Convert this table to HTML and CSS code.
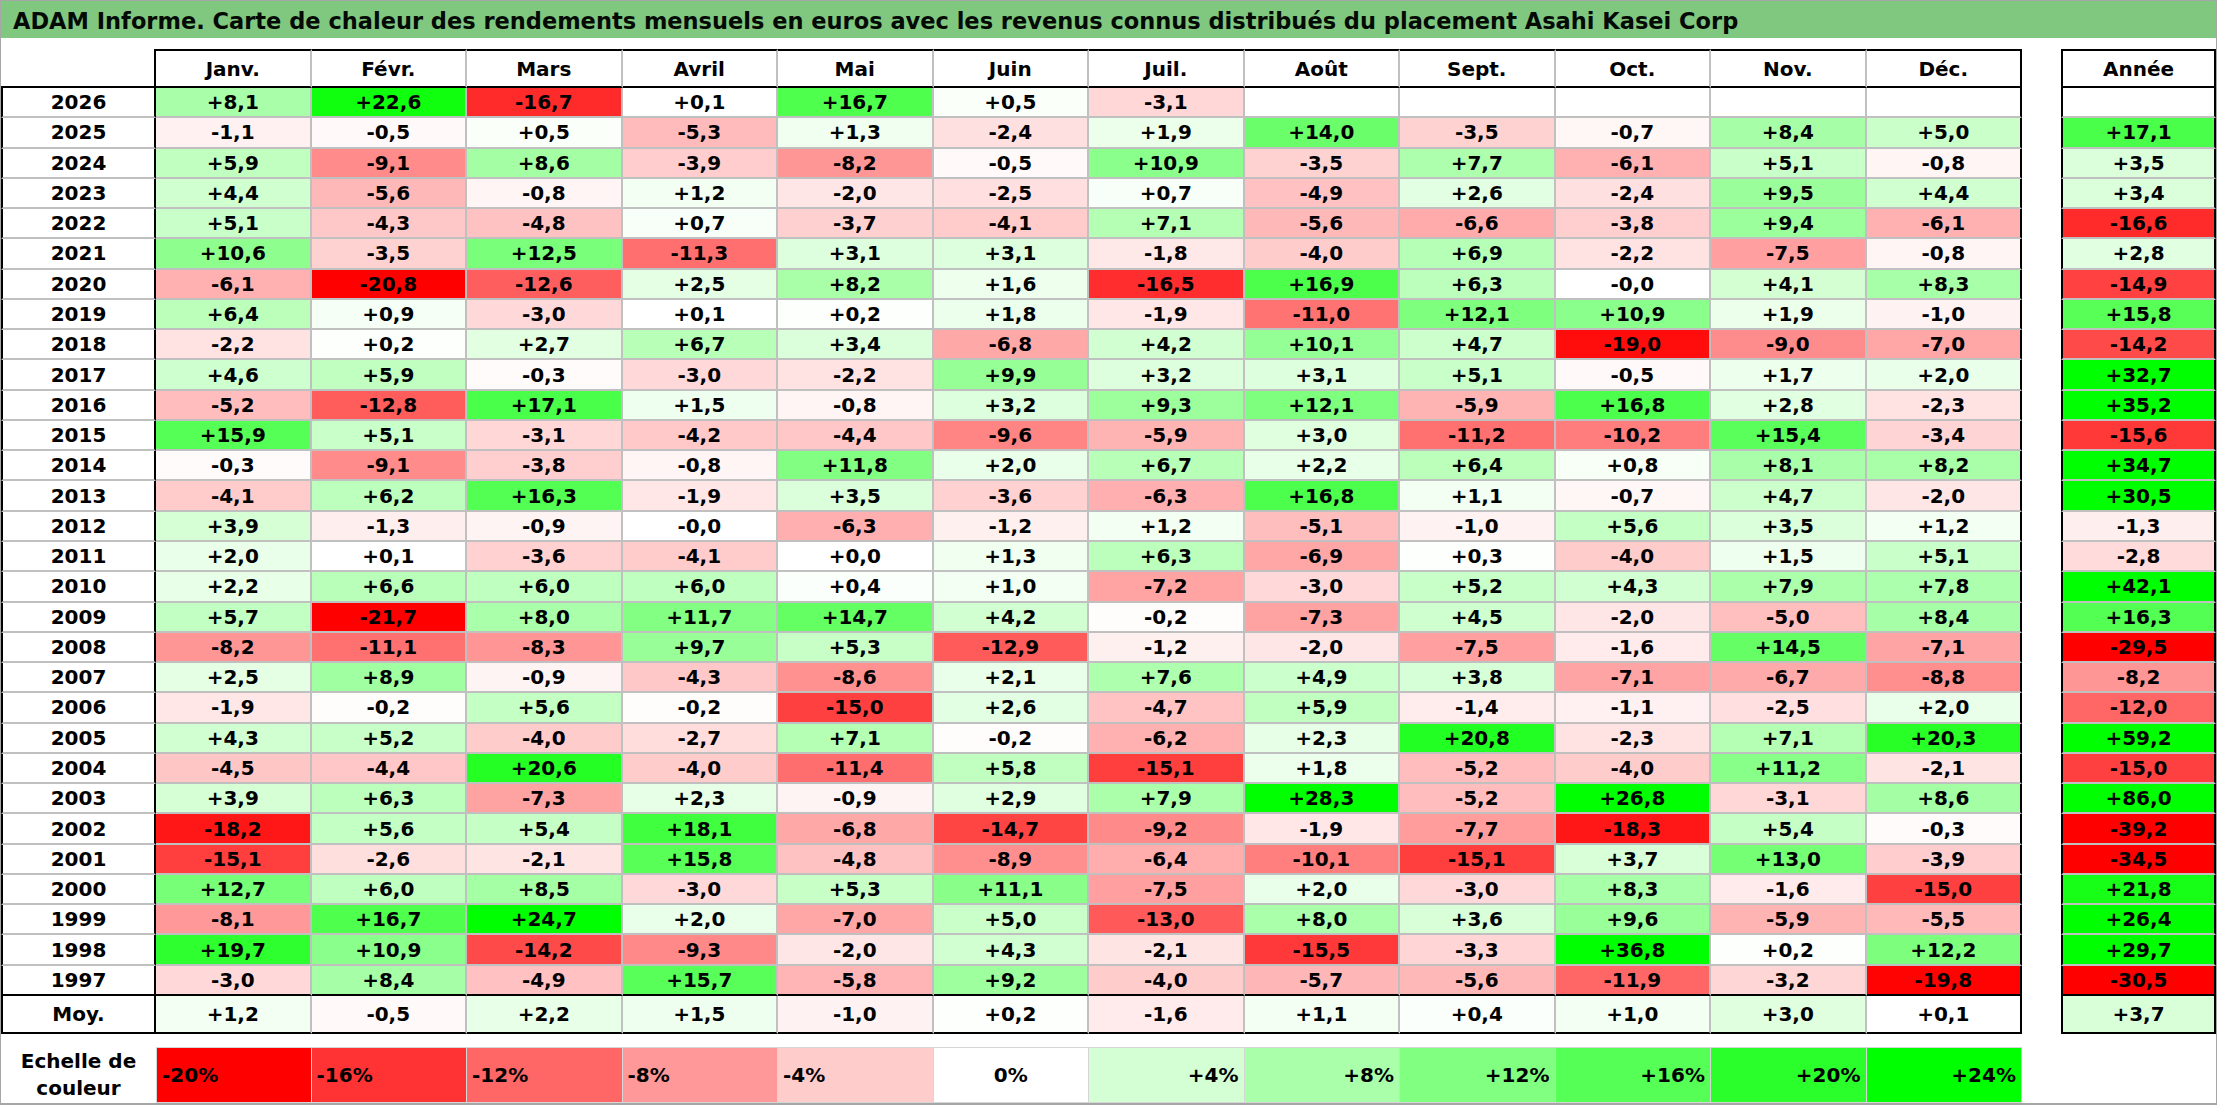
FILE: index.html
```html
<!DOCTYPE html>
<html lang="fr">
<head>
<meta charset="utf-8">
<title>ADAM Informe - Asahi Kasei Corp</title>
<link rel="stylesheet" href="styles.css">
</head>
<body>
<div class="sheet">
  <div class="title">ADAM Informe. Carte de chaleur des rendements mensuels en euros avec les revenus connus distribués du placement Asahi Kasei Corp</div>
  <div class="grid">
    <div class="row hd"><div class="corner"></div><div>Janv.</div><div>Févr.</div><div>Mars</div><div>Avril</div><div>Mai</div><div>Juin</div><div>Juil.</div><div>Août</div><div>Sept.</div><div>Oct.</div><div>Nov.</div><div>Déc.</div><div class="sp"></div><div class="an">Année</div></div>
    <div class="row"><div class="y">2026</div><div class="v">+8,1</div><div class="v">+22,6</div><div class="v">-16,7</div><div class="v">+0,1</div><div class="v">+16,7</div><div class="v">+0,5</div><div class="v">-3,1</div><div class="v"></div><div class="v"></div><div class="v"></div><div class="v"></div><div class="v"></div><div class="sp"></div><div class="v an"></div></div>
    <div class="row"><div class="y">2025</div><div class="v">-1,1</div><div class="v">-0,5</div><div class="v">+0,5</div><div class="v">-5,3</div><div class="v">+1,3</div><div class="v">-2,4</div><div class="v">+1,9</div><div class="v">+14,0</div><div class="v">-3,5</div><div class="v">-0,7</div><div class="v">+8,4</div><div class="v">+5,0</div><div class="sp"></div><div class="v an">+17,1</div></div>
    <div class="row"><div class="y">2024</div><div class="v">+5,9</div><div class="v">-9,1</div><div class="v">+8,6</div><div class="v">-3,9</div><div class="v">-8,2</div><div class="v">-0,5</div><div class="v">+10,9</div><div class="v">-3,5</div><div class="v">+7,7</div><div class="v">-6,1</div><div class="v">+5,1</div><div class="v">-0,8</div><div class="sp"></div><div class="v an">+3,5</div></div>
    <div class="row"><div class="y">2023</div><div class="v">+4,4</div><div class="v">-5,6</div><div class="v">-0,8</div><div class="v">+1,2</div><div class="v">-2,0</div><div class="v">-2,5</div><div class="v">+0,7</div><div class="v">-4,9</div><div class="v">+2,6</div><div class="v">-2,4</div><div class="v">+9,5</div><div class="v">+4,4</div><div class="sp"></div><div class="v an">+3,4</div></div>
    <div class="row"><div class="y">2022</div><div class="v">+5,1</div><div class="v">-4,3</div><div class="v">-4,8</div><div class="v">+0,7</div><div class="v">-3,7</div><div class="v">-4,1</div><div class="v">+7,1</div><div class="v">-5,6</div><div class="v">-6,6</div><div class="v">-3,8</div><div class="v">+9,4</div><div class="v">-6,1</div><div class="sp"></div><div class="v an">-16,6</div></div>
    <div class="row"><div class="y">2021</div><div class="v">+10,6</div><div class="v">-3,5</div><div class="v">+12,5</div><div class="v">-11,3</div><div class="v">+3,1</div><div class="v">+3,1</div><div class="v">-1,8</div><div class="v">-4,0</div><div class="v">+6,9</div><div class="v">-2,2</div><div class="v">-7,5</div><div class="v">-0,8</div><div class="sp"></div><div class="v an">+2,8</div></div>
    <div class="row"><div class="y">2020</div><div class="v">-6,1</div><div class="v">-20,8</div><div class="v">-12,6</div><div class="v">+2,5</div><div class="v">+8,2</div><div class="v">+1,6</div><div class="v">-16,5</div><div class="v">+16,9</div><div class="v">+6,3</div><div class="v">-0,0</div><div class="v">+4,1</div><div class="v">+8,3</div><div class="sp"></div><div class="v an">-14,9</div></div>
    <div class="row"><div class="y">2019</div><div class="v">+6,4</div><div class="v">+0,9</div><div class="v">-3,0</div><div class="v">+0,1</div><div class="v">+0,2</div><div class="v">+1,8</div><div class="v">-1,9</div><div class="v">-11,0</div><div class="v">+12,1</div><div class="v">+10,9</div><div class="v">+1,9</div><div class="v">-1,0</div><div class="sp"></div><div class="v an">+15,8</div></div>
    <div class="row"><div class="y">2018</div><div class="v">-2,2</div><div class="v">+0,2</div><div class="v">+2,7</div><div class="v">+6,7</div><div class="v">+3,4</div><div class="v">-6,8</div><div class="v">+4,2</div><div class="v">+10,1</div><div class="v">+4,7</div><div class="v">-19,0</div><div class="v">-9,0</div><div class="v">-7,0</div><div class="sp"></div><div class="v an">-14,2</div></div>
    <div class="row"><div class="y">2017</div><div class="v">+4,6</div><div class="v">+5,9</div><div class="v">-0,3</div><div class="v">-3,0</div><div class="v">-2,2</div><div class="v">+9,9</div><div class="v">+3,2</div><div class="v">+3,1</div><div class="v">+5,1</div><div class="v">-0,5</div><div class="v">+1,7</div><div class="v">+2,0</div><div class="sp"></div><div class="v an">+32,7</div></div>
    <div class="row"><div class="y">2016</div><div class="v">-5,2</div><div class="v">-12,8</div><div class="v">+17,1</div><div class="v">+1,5</div><div class="v">-0,8</div><div class="v">+3,2</div><div class="v">+9,3</div><div class="v">+12,1</div><div class="v">-5,9</div><div class="v">+16,8</div><div class="v">+2,8</div><div class="v">-2,3</div><div class="sp"></div><div class="v an">+35,2</div></div>
    <div class="row"><div class="y">2015</div><div class="v">+15,9</div><div class="v">+5,1</div><div class="v">-3,1</div><div class="v">-4,2</div><div class="v">-4,4</div><div class="v">-9,6</div><div class="v">-5,9</div><div class="v">+3,0</div><div class="v">-11,2</div><div class="v">-10,2</div><div class="v">+15,4</div><div class="v">-3,4</div><div class="sp"></div><div class="v an">-15,6</div></div>
    <div class="row"><div class="y">2014</div><div class="v">-0,3</div><div class="v">-9,1</div><div class="v">-3,8</div><div class="v">-0,8</div><div class="v">+11,8</div><div class="v">+2,0</div><div class="v">+6,7</div><div class="v">+2,2</div><div class="v">+6,4</div><div class="v">+0,8</div><div class="v">+8,1</div><div class="v">+8,2</div><div class="sp"></div><div class="v an">+34,7</div></div>
    <div class="row"><div class="y">2013</div><div class="v">-4,1</div><div class="v">+6,2</div><div class="v">+16,3</div><div class="v">-1,9</div><div class="v">+3,5</div><div class="v">-3,6</div><div class="v">-6,3</div><div class="v">+16,8</div><div class="v">+1,1</div><div class="v">-0,7</div><div class="v">+4,7</div><div class="v">-2,0</div><div class="sp"></div><div class="v an">+30,5</div></div>
    <div class="row"><div class="y">2012</div><div class="v">+3,9</div><div class="v">-1,3</div><div class="v">-0,9</div><div class="v">-0,0</div><div class="v">-6,3</div><div class="v">-1,2</div><div class="v">+1,2</div><div class="v">-5,1</div><div class="v">-1,0</div><div class="v">+5,6</div><div class="v">+3,5</div><div class="v">+1,2</div><div class="sp"></div><div class="v an">-1,3</div></div>
    <div class="row"><div class="y">2011</div><div class="v">+2,0</div><div class="v">+0,1</div><div class="v">-3,6</div><div class="v">-4,1</div><div class="v">+0,0</div><div class="v">+1,3</div><div class="v">+6,3</div><div class="v">-6,9</div><div class="v">+0,3</div><div class="v">-4,0</div><div class="v">+1,5</div><div class="v">+5,1</div><div class="sp"></div><div class="v an">-2,8</div></div>
    <div class="row"><div class="y">2010</div><div class="v">+2,2</div><div class="v">+6,6</div><div class="v">+6,0</div><div class="v">+6,0</div><div class="v">+0,4</div><div class="v">+1,0</div><div class="v">-7,2</div><div class="v">-3,0</div><div class="v">+5,2</div><div class="v">+4,3</div><div class="v">+7,9</div><div class="v">+7,8</div><div class="sp"></div><div class="v an">+42,1</div></div>
    <div class="row"><div class="y">2009</div><div class="v">+5,7</div><div class="v">-21,7</div><div class="v">+8,0</div><div class="v">+11,7</div><div class="v">+14,7</div><div class="v">+4,2</div><div class="v">-0,2</div><div class="v">-7,3</div><div class="v">+4,5</div><div class="v">-2,0</div><div class="v">-5,0</div><div class="v">+8,4</div><div class="sp"></div><div class="v an">+16,3</div></div>
    <div class="row"><div class="y">2008</div><div class="v">-8,2</div><div class="v">-11,1</div><div class="v">-8,3</div><div class="v">+9,7</div><div class="v">+5,3</div><div class="v">-12,9</div><div class="v">-1,2</div><div class="v">-2,0</div><div class="v">-7,5</div><div class="v">-1,6</div><div class="v">+14,5</div><div class="v">-7,1</div><div class="sp"></div><div class="v an">-29,5</div></div>
    <div class="row"><div class="y">2007</div><div class="v">+2,5</div><div class="v">+8,9</div><div class="v">-0,9</div><div class="v">-4,3</div><div class="v">-8,6</div><div class="v">+2,1</div><div class="v">+7,6</div><div class="v">+4,9</div><div class="v">+3,8</div><div class="v">-7,1</div><div class="v">-6,7</div><div class="v">-8,8</div><div class="sp"></div><div class="v an">-8,2</div></div>
    <div class="row"><div class="y">2006</div><div class="v">-1,9</div><div class="v">-0,2</div><div class="v">+5,6</div><div class="v">-0,2</div><div class="v">-15,0</div><div class="v">+2,6</div><div class="v">-4,7</div><div class="v">+5,9</div><div class="v">-1,4</div><div class="v">-1,1</div><div class="v">-2,5</div><div class="v">+2,0</div><div class="sp"></div><div class="v an">-12,0</div></div>
    <div class="row"><div class="y">2005</div><div class="v">+4,3</div><div class="v">+5,2</div><div class="v">-4,0</div><div class="v">-2,7</div><div class="v">+7,1</div><div class="v">-0,2</div><div class="v">-6,2</div><div class="v">+2,3</div><div class="v">+20,8</div><div class="v">-2,3</div><div class="v">+7,1</div><div class="v">+20,3</div><div class="sp"></div><div class="v an">+59,2</div></div>
    <div class="row"><div class="y">2004</div><div class="v">-4,5</div><div class="v">-4,4</div><div class="v">+20,6</div><div class="v">-4,0</div><div class="v">-11,4</div><div class="v">+5,8</div><div class="v">-15,1</div><div class="v">+1,8</div><div class="v">-5,2</div><div class="v">-4,0</div><div class="v">+11,2</div><div class="v">-2,1</div><div class="sp"></div><div class="v an">-15,0</div></div>
    <div class="row"><div class="y">2003</div><div class="v">+3,9</div><div class="v">+6,3</div><div class="v">-7,3</div><div class="v">+2,3</div><div class="v">-0,9</div><div class="v">+2,9</div><div class="v">+7,9</div><div class="v">+28,3</div><div class="v">-5,2</div><div class="v">+26,8</div><div class="v">-3,1</div><div class="v">+8,6</div><div class="sp"></div><div class="v an">+86,0</div></div>
    <div class="row"><div class="y">2002</div><div class="v">-18,2</div><div class="v">+5,6</div><div class="v">+5,4</div><div class="v">+18,1</div><div class="v">-6,8</div><div class="v">-14,7</div><div class="v">-9,2</div><div class="v">-1,9</div><div class="v">-7,7</div><div class="v">-18,3</div><div class="v">+5,4</div><div class="v">-0,3</div><div class="sp"></div><div class="v an">-39,2</div></div>
    <div class="row"><div class="y">2001</div><div class="v">-15,1</div><div class="v">-2,6</div><div class="v">-2,1</div><div class="v">+15,8</div><div class="v">-4,8</div><div class="v">-8,9</div><div class="v">-6,4</div><div class="v">-10,1</div><div class="v">-15,1</div><div class="v">+3,7</div><div class="v">+13,0</div><div class="v">-3,9</div><div class="sp"></div><div class="v an">-34,5</div></div>
    <div class="row"><div class="y">2000</div><div class="v">+12,7</div><div class="v">+6,0</div><div class="v">+8,5</div><div class="v">-3,0</div><div class="v">+5,3</div><div class="v">+11,1</div><div class="v">-7,5</div><div class="v">+2,0</div><div class="v">-3,0</div><div class="v">+8,3</div><div class="v">-1,6</div><div class="v">-15,0</div><div class="sp"></div><div class="v an">+21,8</div></div>
    <div class="row"><div class="y">1999</div><div class="v">-8,1</div><div class="v">+16,7</div><div class="v">+24,7</div><div class="v">+2,0</div><div class="v">-7,0</div><div class="v">+5,0</div><div class="v">-13,0</div><div class="v">+8,0</div><div class="v">+3,6</div><div class="v">+9,6</div><div class="v">-5,9</div><div class="v">-5,5</div><div class="sp"></div><div class="v an">+26,4</div></div>
    <div class="row"><div class="y">1998</div><div class="v">+19,7</div><div class="v">+10,9</div><div class="v">-14,2</div><div class="v">-9,3</div><div class="v">-2,0</div><div class="v">+4,3</div><div class="v">-2,1</div><div class="v">-15,5</div><div class="v">-3,3</div><div class="v">+36,8</div><div class="v">+0,2</div><div class="v">+12,2</div><div class="sp"></div><div class="v an">+29,7</div></div>
    <div class="row last"><div class="y">1997</div><div class="v">-3,0</div><div class="v">+8,4</div><div class="v">-4,9</div><div class="v">+15,7</div><div class="v">-5,8</div><div class="v">+9,2</div><div class="v">-4,0</div><div class="v">-5,7</div><div class="v">-5,6</div><div class="v">-11,9</div><div class="v">-3,2</div><div class="v">-19,8</div><div class="sp"></div><div class="v an">-30,5</div></div>
    <div class="row moy"><div class="y">Moy.</div><div class="v">+1,2</div><div class="v">-0,5</div><div class="v">+2,2</div><div class="v">+1,5</div><div class="v">-1,0</div><div class="v">+0,2</div><div class="v">-1,6</div><div class="v">+1,1</div><div class="v">+0,4</div><div class="v">+1,0</div><div class="v">+3,0</div><div class="v">+0,1</div><div class="sp"></div><div class="v an">+3,7</div></div>
  </div>
  <div class="legend">
    <div class="lab">Echelle de<br>couleur</div>
    <div class="k neg n20">-20%</div>
    <div class="k neg n16">-16%</div>
    <div class="k neg n12">-12%</div>
    <div class="k neg n8">-8%</div>
    <div class="k neg n4">-4%</div>
    <div class="k zero">0%</div>
    <div class="k pos p4">+4%</div>
    <div class="k pos p8">+8%</div>
    <div class="k pos p12">+12%</div>
    <div class="k pos p16">+16%</div>
    <div class="k pos p20">+20%</div>
    <div class="k pos p24">+24%</div>
  </div>
</div>
<script src="script.js"></script>
</body>
</html>
```

FILE: styles.css
```css
html, body {
  margin: 0;
  padding: 0;
  background: #ffffff;
}

.sheet {
  box-sizing: border-box;
  width: 2217px;
  height: 1105px;
  border-top: 1px solid #a6a6a6;
  border-left: 1px solid #a6a6a6;
  border-right: 1px solid #a6a6a6;
  border-bottom: 2px solid #a6a6a6;
  font-family: "DejaVu Sans", "Liberation Sans", sans-serif;
  font-weight: bold;
  font-size: 20px;
  color: #000;
  overflow: hidden;
}

.title {
  box-sizing: border-box;
  height: 37px;
  padding: 4px 0 0 12px;
  line-height: 33px;
  font-size: 22.5px;
  background: #80c880;
  white-space: nowrap;
  color: #050a05;
}

.grid {
  margin-top: 11px;
  display: grid;
  grid-template-columns: 155px repeat(12, 155.5px) 39px 155px;
  grid-template-rows: 39px repeat(30, 30.27px) 38px;
}

.row {
  display: contents;
}

.row > div {
  box-sizing: border-box;
  border-right: 2px solid #c0c0c0;
  border-bottom: 2px solid #c0c0c0;
  display: flex;
  align-items: center;
  justify-content: center;
  white-space: nowrap;
  background: #ffffff;
}

.row > div:nth-child(13) {
  border-right-color: #000;
}

.row > .y {
  border-left: 2px solid #000;
  border-right: 2px solid #000;
}

.row > .an {
  border-left: 2px solid #000;
  border-right: 2px solid #000;
}

.hd > div {
  border-top: 2px solid #000;
  border-bottom: 2px solid #000;
}

.hd > .corner {
  border-top: 0;
  border-right: 2px solid #000;
}

.last > div,
.moy > div {
  border-bottom-color: #000;
}

.row > .sp {
  border: 0;
  background: #ffffff;
}

.legend {
  margin-top: 13px;
  height: 56px;
  display: grid;
  grid-template-columns: 155px repeat(12, 155.5px);
}

.lab {
  display: flex;
  align-items: center;
  justify-content: center;
  text-align: center;
  line-height: 27px;
}

.k {
  box-sizing: border-box;
  display: flex;
  align-items: center;
  border: 1px solid #d6d6d6;
  border-left: 0;
}

.k.n20 { border-left: 1px solid #d6d6d6; }

.neg { justify-content: flex-start; padding-left: 5px; }
.zero { justify-content: center; }
.pos { justify-content: flex-end; padding-right: 5px; }

.n20 { background: #ff0000; }
.n16 { background: #ff3333; }
.n12 { background: #ff6666; }
.n8  { background: #ff9999; }
.n4  { background: #ffcccc; }
.zero { background: #ffffff; }
.p4  { background: #d4ffd4; }
.p8  { background: #aaffaa; }
.p12 { background: #80ff80; }
.p16 { background: #55ff55; }
.p20 { background: #2bff2b; }
.p24 { background: #00ff00; }
```

FILE: script.js
```js
(function () {
  function heat(v) {
    var t, c;
    if (v < 0) {
      t = Math.min(-v / 20, 1);
      c = Math.round(255 * (1 - t));
      return 'rgb(255,' + c + ',' + c + ')';
    }
    t = Math.min(v / 24, 1);
    c = Math.round(255 * (1 - t));
    return 'rgb(' + c + ',255,' + c + ')';
  }
  var cells = document.querySelectorAll('.v');
  for (var i = 0; i < cells.length; i++) {
    var s = cells[i].textContent.trim();
    if (!s) continue;
    var v = parseFloat(s.replace(',', '.'));
    if (!isNaN(v)) cells[i].style.backgroundColor = heat(v);
  }
})();
```
